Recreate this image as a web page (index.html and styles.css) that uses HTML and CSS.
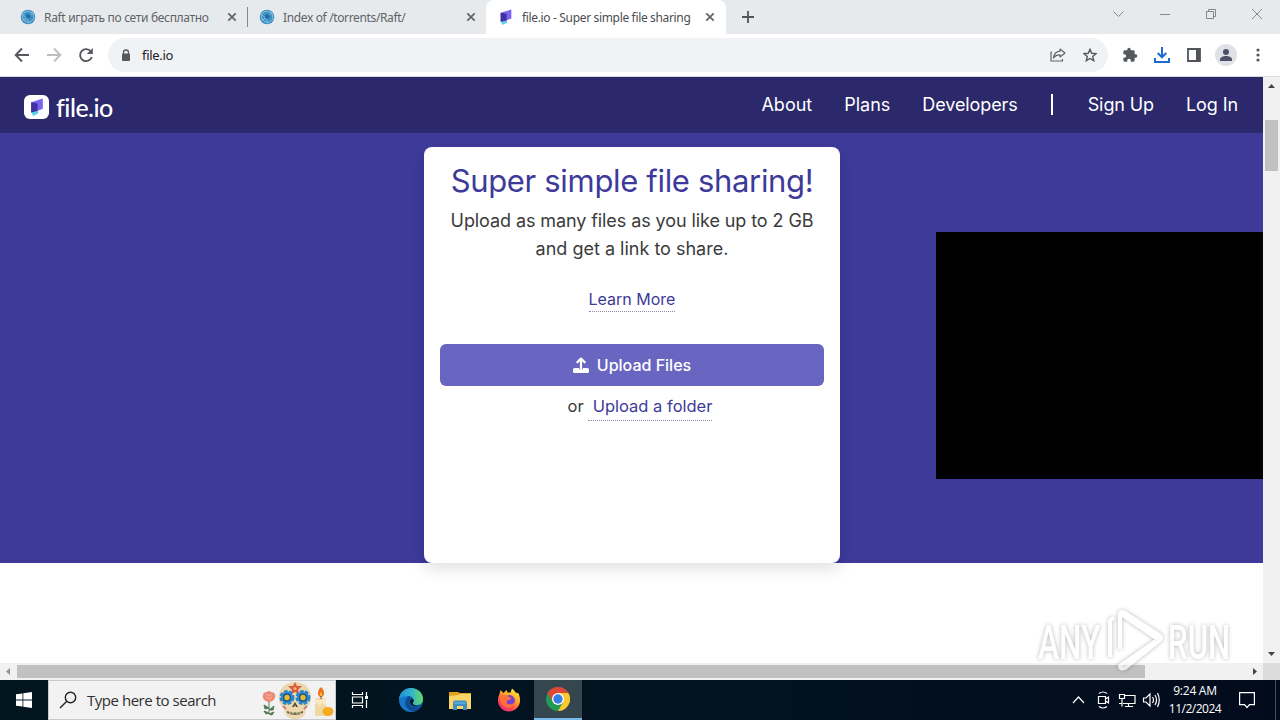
FILE: index.html
```html
<!DOCTYPE html>
<html lang="en">
<head>
    <meta charset="UTF-8">
    <meta name="viewport" content="width=device-width, initial-scale=1.0">
    <title>file.io - Super simple file sharing</title>
    <link rel="stylesheet" href="styles.css">
</head>
<body>

    <!-- shared icons -->
    <svg class="defs" width="0" height="0">
        <symbol id="globe" viewBox="0 0 16 16">
            <circle cx="8" cy="8" r="7.3" fill="#3c8fc4"/>
            <path d="M2 5l5-3 6 2 1 6-5 4-6-3zM2 5l5 4 6-5M7 9l2 5M3 11l4-2" fill="none" stroke="#8cc3dc" stroke-width=".9"/>
            <path d="M6 6l3-1 2 2-2 3-3-1z" fill="#1f6fa8"/>
        </symbol>
        <symbol id="close" viewBox="0 0 10 10">
            <path d="M1.300 1.300l7.400 7.400M8.700 1.300L1.300 8.700" fill="none" stroke="#5f6368" stroke-width="1.700"/>
        </symbol>
        <symbol id="fileio" viewBox="0 0 12 15">
            <path d="M1 10l6-1v4L2.500 15z" fill="#55d3e5"/>
            <path d="M1 3.500L11 .5v8.500L6.500 10.600 1 12z" fill="#7d62ef"/>
            <path d="M1 3.500l5.500 1v6.200L1 12z" fill="#4030a0"/>
        </symbol>
    </svg>

    <div class="tab-strip">
        <div class="tab">
            <svg class="favicon" width="16" height="16"><use href="#globe"/></svg>
            <span class="tab-title title-raft">Raft играть по сети бесплатно</span>
            <svg class="close" width="10" height="10"><use href="#close"/></svg>
        </div>
        <div class="tab divided">
            <svg class="favicon" width="16" height="16"><use href="#globe"/></svg>
            <span class="tab-title title-index">Index of /torrents/Raft/</span>
            <svg class="close" width="10" height="10"><use href="#close"/></svg>
        </div>
        <div class="tab active">
            <svg class="favicon" width="16" height="16"><use href="#fileio"/></svg>
            <span class="tab-title title-fileio">file.io - Super simple file sharing</span>
            <svg class="close" width="10" height="10"><use href="#close"/></svg>
        </div>
        <svg class="new-tab" width="12" height="12" viewBox="0 0 12 12"><path d="M6 0v12M0 6h12" stroke="#50555a" stroke-width="1.800"/></svg>
        <svg class="window-buttons" width="152" height="28" viewBox="0 0 152 28" fill="none" stroke="#85898d" stroke-width="1">
            <path d="M1.500 11.500l5 5 5-5"/>
            <path d="M48 14.500h10"/>
            <path d="M94.500 11.500h7v7h-7zM96.500 11.500v-2h7v7h-2"/>
            <path d="M140 9l10 10M150 9l-10 10"/>
        </svg>
    </div>

    <div class="toolbar">
        <svg class="nav-buttons" width="80" height="16" viewBox="0 0 80 16" fill="none" stroke="#55595e" stroke-width="1.900">
            <path d="M15 8H2M8 1.500L1.700 8 8 14.500"/>
            <path d="M33 8h13M40 1.500L46.300 8 40 14.500" stroke="#bcbec1"/>
            <path d="M76.900 4.500A6 6 0 1 0 77.800 10"/>
            <path d="M78.800 1v6h-6z" fill="#55595e" stroke="none"/>
        </svg>
        <div class="address-bar">
            <svg width="10" height="13" viewBox="0 0 10 13"><rect y="4.500" x="1" width="8" height="7.500" rx="1" fill="#55595e"/><path d="M2.500 5V3.500a2.500 2.500 0 0 1 5 0V5" fill="none" stroke="#55595e" stroke-width="1.300"/></svg>
            <span class="url">file.io</span>
            <svg class="share" width="16" height="14" viewBox="0 0 16 14" fill="none" stroke="#60646a" stroke-width="1.200"><path d="M2 4H1v9h11.500v-2M10 1l5 4-5 4V6.800C7 6.800 5 7.500 3.500 10 4 6 6 3.500 10 3.200z" stroke-linejoin="round"/></svg>
            <svg width="14" height="14" viewBox="0 0 14 14"><path d="M7 1.300l1.700 4 4.300.4-3.300 2.800 1 4.200L7 10.500l-3.700 2.200 1-4.200L1 5.700l4.300-.4z" fill="none" stroke="#55595e" stroke-width="1.400"/></svg>
        </div>
        <svg class="ext" width="16" height="16" viewBox="0 0 24 24"><path d="M20.500 11H19V7a2 2 0 0 0-2-2h-4V3.500a2.500 2.500 0 0 0-5 0V5H4a2 2 0 0 0-2 2v3.800h1.500a2.700 2.700 0 0 1 0 5.400H2V20a2 2 0 0 0 2 2h3.800v-1.500a2.700 2.700 0 0 1 5.400 0V22H17a2 2 0 0 0 2-2v-4h1.500a2.500 2.500 0 0 0 0-5z" fill="#55595e"/></svg>
        <svg class="download" width="16" height="16" viewBox="0 0 16 16" fill="none" stroke="#1b6ad6" stroke-width="2"><path d="M8 0v10M3.700 6L8 10.300 12.300 6M1 11v4h14v-4"/></svg>
        <svg class="side-panel" width="14" height="14" viewBox="0 0 14 14"><path d="M1 1h12v12H1z" fill="none" stroke="#50545a" stroke-width="1.800"/><path d="M9 1h4v12H9z" fill="#50545a"/></svg>
        <svg class="profile" width="22" height="22" viewBox="0 0 22 22"><circle cx="11" cy="11" r="11" fill="#dfe1e7"/><circle cx="11" cy="8" r="3" fill="#4c5068"/><path d="M5 17v-1.500c0-2 3-3.500 6-3.500s6 1.500 6 3.500V17z" fill="#4c5068"/></svg>
        <svg class="menu" width="4" height="14" viewBox="0 0 4 14" fill="#55595e"><circle cx="2" cy="2" r="1.600"/><circle cx="2" cy="7" r="1.600"/><circle cx="2" cy="12" r="1.600"/></svg>
    </div>

    <div class="viewport">
        <div class="page">
            <header class="navbar">
                <a class="brand">
                    <span class="brand-mark"><svg width="14" height="18" viewBox="0 0 12 15" preserveAspectRatio="none"><use href="#fileio"/></svg></span>
                    <span class="brand-name">file.io</span>
                </a>
                <nav class="nav-links">
                    <a class="about">About</a>
                    <a class="plans">Plans</a>
                    <a class="developers">Developers</a>
                    <span class="nav-divider"></span>
                    <a class="sign-up">Sign Up</a>
                    <a class="log-in">Log In</a>
                </nav>
            </header>
            <main class="hero">
                <section class="card">
                    <h1>Super simple file sharing!</h1>
                    <p class="lead"><span class="lead-first">Upload as many files as you like up to 2 GB</span><br><span class="lead-second">and get a link to share.</span></p>
                    <a class="learn-more">Learn More</a>
                    <button class="upload">
                        <svg width="16" height="16" viewBox="0 0 16 16"><path d="M8 12V2M4.300 5.300L8 1.600l3.700 3.700" fill="none" stroke="#fff" stroke-width="2.200" stroke-linecap="round" stroke-linejoin="round"/><path d="M1.500 11H6a2 2 0 0 0 4 0h4.500A1.500 1.500 0 0 1 16 12.500v2a1.500 1.500 0 0 1-1.500 1.500h-13A1.500 1.500 0 0 1 0 14.500v-2A1.500 1.500 0 0 1 1.500 11z" fill="#fff"/></svg>
                        <span>Upload Files</span>
                    </button>
                    <p class="folder">or <a>Upload a folder</a></p>
                </section>
                <div class="video"></div>
            </main>
        </div>
        <div class="scroll-y">
            <svg width="7" height="4" viewBox="0 0 7 4"><path d="M0 4l3.500-4L7 4z" fill="#444"/></svg>
            <div class="thumb-y"></div>
            <svg class="down" width="7" height="4" viewBox="0 0 7 4"><path d="M0 0h7L3.500 4z" fill="#444"/></svg>
        </div>
    </div>
    <div class="scroll-x">
        <svg width="4" height="7" viewBox="0 0 4 7"><path d="M4 0v7L0 3.500z" fill="#929292"/></svg>
        <div class="thumb-x"></div>
        <svg class="right" width="4" height="7" viewBox="0 0 4 7"><path d="M0 0v7l4-3.500z" fill="#444"/></svg>
        <span class="corner"></span>
    </div>

    <div class="taskbar">
        <div class="start">
            <svg width="16" height="16" viewBox="0 0 16 16" fill="#fff"><path d="M0 2.300L6.500 1.400v6.200H0zM7.300 1.300L16 0v7.600H7.300zM0 8.400h6.500v6.200L0 13.700zM7.300 8.400H16V16l-8.700-1.300z"/></svg>
        </div>
        <div class="search">
            <svg width="18" height="18" viewBox="0 0 18 18" fill="none" stroke="#222" stroke-width="1.400"><circle cx="11.500" cy="6.500" r="5.200"/><path d="M7.800 10.200L1 17"/></svg>
            <span class="search-text">Type here to search</span>
            <svg class="festive" width="76" height="38" viewBox="0 0 76 38">
                <!-- rose -->
                <path d="M9 20v13M9 27l-5-3 1 4zM9 29l5-4-1 4zM9 32l-5-2 2 3zM9 33l5-2-2 3z" fill="#527a57" stroke="#527a57"/>
                <path d="M3 14q0-3 4-3 2-2 4 0 4 0 4 3 1 4-3 6-3 2-6 0-4-2-3-6z" fill="#ed8a76"/>
                <path d="M6 16l3 2 3-2M6 13l3 2 3-2" fill="none" stroke="#f5b3a2"/>
                <!-- skull -->
                <path d="M35 1c10 0 17 7 16 17 0 5-3 7-5 9l-1 6q-2 5-10 5t-10-5l-1-6c-2-2-5-4-5-9C18 8 25 1 35 1z" fill="#ecd8af"/>
                <path d="M35 1l2 4 5 0-4 4 2 5-5-3-5 3 2-5-4-4h5z" fill="#db5b42"/>
                <circle cx="35" cy="7.500" r="1.500" fill="#f7ba5b"/>
                <g fill="#2a86c9"><circle cx="27" cy="16.500" r="6"/><circle cx="43" cy="16.500" r="6"/></g>
                <g fill="none" stroke="#2a86c9" stroke-width="4" stroke-dasharray="3.200 1.300"><circle cx="27" cy="16.500" r="5.500"/><circle cx="43" cy="16.500" r="5.500"/></g>
                <g fill="#24507c"><circle cx="27" cy="16.500" r="4"/><circle cx="43" cy="16.500" r="4"/></g>
                <g fill="#e6bc37"><circle cx="27" cy="16.500" r="2.700"/><circle cx="43" cy="16.500" r="2.700"/></g>
                <path d="M35 21l-3 5h2l1-2 1 2h2z" fill="#55483b"/>
                <path d="M27 30q8 3 16 0v2q-8 4-16 0z" fill="#6d6a4c"/>
                <path d="M30 31v2M33 31v2M37 31v2M40 31v2" stroke="#ecd8af"/>
                <path d="M23 25l3 3M47 25l-3 3" stroke="#d3796b" stroke-width="2"/>
                <!-- candle -->
                <path d="M55 17h11v18H55z" fill="#efd8a2"/>
                <path d="M55 17q5 4 11 0v6q-2 3-4-2l-2 5-2-4-3 1z" fill="#f9e9c3"/>
                <path d="M61 6c5 5 3 10 0 10s-5-5 0-10z" fill="#ec721c"/>
                <path d="M61 11c2 2 1 4 0 4s-2-2 0-4z" fill="#fcc341"/>
                <path d="M61 15v3" stroke="#6b4429"/>
                <ellipse cx="68" cy="30.500" rx="5.500" ry="4.500" fill="#f7ab1f"/>
            </svg>
        </div>
        <div class="task">
            <svg width="18" height="16" viewBox="0 0 18 16" fill="none" stroke="#fff" stroke-width="1.200"><path d="M1.500 0v2.500h10V0M1.500 16v-2.500h10V16M1.500 5h10v6h-10zM15.500 0v4M15.500 8v8"/><path d="M14 4h3v3h-3z" fill="#fff" stroke="none"/></svg>
        </div>
        <div class="task edge">
            <svg width="24" height="24" viewBox="0 0 24 24">
                <defs><linearGradient id="edge-top" x1="0" x2="1"><stop offset="0" stop-color="#2190d8"/><stop offset=".5" stop-color="#2fb4d0"/><stop offset="1" stop-color="#67db63"/></linearGradient></defs>
                <circle cx="12" cy="12" r="12" fill="#1675c8"/>
                <path d="M0 11C1 4 6 0 12 0c7 0 12 5 12 11 0 4-3 6-7 6-3 0-4-1-3-3 2-4-1-6-5-6-4 0-7 1-9 3z" fill="url(#edge-top)"/>
                <path d="M9 9c-5 4-3 11 3 14 5 1 8-1 10-5-3 2-9 2-11-2-1-3 0-5 2-6-1-1-3-2-4-1z" fill="#104b91"/>
                <path d="M24 15.500c-3 3-9 2.500-10 .5-.6-1 .8-2 .8-3.500 0-2-3-2.500-3.800.5-.5 3.500 2.500 5.500 6.500 5.500 3 0 5-1 6.500-3z" fill="#03161f"/>
            </svg>
        </div>
        <div class="task files">
            <svg width="22" height="19" viewBox="0 0 22 19"><path d="M0 1h9l2 1h11v16H0z" fill="#e6a020"/><path d="M0 5l9-1 2-1h11v15H0z" fill="#fcd468"/><path d="M4 19v-8l1.500-1.500h11L18 11v8h-4v-4H8v4z" fill="#3f8fc6"/><path d="M5 11h12v2H5z" fill="#5ba6d4"/></svg>
        </div>
        <div class="task firefox">
            <svg width="24" height="24" viewBox="0 0 24 24">
                <defs><linearGradient id="fox" x1=".8" x2=".2" y2="1"><stop offset="0" stop-color="#fff043"/><stop offset=".4" stop-color="#ffa127"/><stop offset=".7" stop-color="#ff4a50"/><stop offset="1" stop-color="#ee2384"/></linearGradient></defs>
                <path d="M2.500 6l1-4 3 3 3-3 1 2.500h3L15 .5c2 1.500 3.500 4 5 5l1-1c5.500 11-1 19-9 19C4 23.500-2 15 2.500 6z" fill="url(#fox)"/>
                <circle cx="12.500" cy="12.500" r="5.400" fill="#7941cf"/><path d="M4 8c4-2 6-1 8 1l3 1-3 2c-3 0-3 3-1 4 3 1 5 0 7-2-1 5-6 7-10 5-4-2-5-6-4-11z" fill="#ff7139"/>
            </svg>
        </div>
        <div class="task chrome">
            <svg width="24" height="24" viewBox="0 0 24 24"><circle cx="12" cy="12" r="12" fill="#229954"/><path d="M1.600 6A12 12 0 0 1 22.400 6H12L6.800 15z" fill="#df4638"/><path d="M22.400 6A12 12 0 0 1 12 24l5.200-9L12 6z" fill="#fbc82d"/><circle cx="12" cy="12" r="6" fill="#fff"/><circle cx="12" cy="12" r="4.700" fill="#377ee6"/></svg>
        </div>
        <div class="tray">
            <svg width="88" height="18" viewBox="0 0 88 18" fill="none" stroke="#fff" stroke-width="1.200">
                <path d="M1 12l5.500-6L12 12"/>
                <path d="M26.500 5.500h7v7h-7zM33.500 8l3-2v6l-3-2M27 2.500q4-3 8 0M27 15.500q4 3 8 0"/>
                <path d="M52 4.500h11v8H51M56.500 12.500v3M53 15.500h8M47.500 3.500h5v4h-5zM50 7.500v8M47 12.500h3"/>
                <path d="M71.500 7h2.500l4-4v12l-4-4h-2.500zM80.500 6q2 3 0 6M83 4q3 5 0 10M85.500 2q3.500 7 0 14"/>
            </svg>
            <div class="clock"><span class="time">9:24 AM</span><span class="date">11/2/2024</span></div>
            <svg class="notice" width="16" height="17" viewBox="0 0 16 17" fill="none" stroke="#fff" stroke-width="1.200"><path d="M.6.600h14.800v12H10.500L8 15.500 5.500 12.600H.6z"/></svg>
            <span class="show-desktop"></span>
        </div>
    </div>

    <div class="watermark">
        <svg width="212" height="72" viewBox="0 0 212 72">
            <g class="mark-text">
                <text transform="translate(4 54) scale(.66 1)">ANY</text>
                <text transform="translate(134 54) scale(.65 1)">RUN</text>
            </g>
            <path class="mark-line" d="M76 52V17q0-3 4-4M86 44V10q0-5 5-2l34 22q4 3 0 6L91 63q-5 2-5-2l36-25M87 9l37 25"/>
        </svg>
    </div>

</body>
</html>
```
FILE: styles.css
```css
* {
    box-sizing: border-box;
}
body {
    margin: 0;
    width: 1280px;
    height: 720px;
    overflow: hidden;
    position: relative;
    background: #fff;
    font-family: Inter, sans-serif;
}
svg {
    display: block;
    flex: none;
}
.defs {
    position: absolute;
}
span, a {
    white-space: nowrap;
}

/* browser window */
.tab-strip {
    display: flex;
    height: 34px;
    padding-left: 7px;
    background: #e7eaed;
}
.tab {
    display: flex;
    align-items: center;
    width: 241px;
    padding: 0 11px 0 13px;
    font: 12px "Noto Sans", sans-serif;
    color: #5f6368;
}
.tab:first-child {
    background: linear-gradient(#85898d, #85898d) right 7px / 1px 20px no-repeat;
}
.tab.divided {
    width: 238px;
    padding-left: 11px;
    padding-right: 10px;
}
.favicon {
    margin-right: 8px;
}
.tab .close {
    margin-left: auto;
}
.tab.active {
    width: 240px;
    background: #fff;
    border-radius: 8px 8px 0 0;
    padding-left: 12px;
    color: #4b4e52;
}
.title-raft {
    letter-spacing: -0.33px;
}
.title-index {
    letter-spacing: -0.36px;
}
.title-fileio {
    letter-spacing: -0.34px;
}
.new-tab {
    margin: 11px 0 0 16px;
}
.window-buttons {
    margin-left: auto;
    margin-right: 16px;
}
.toolbar {
    display: flex;
    align-items: center;
    height: 43px;
    padding: 0 14px;
    border-bottom: 1px solid #dadce0;
}
.address-bar {
    display: flex;
    flex: none;
    align-items: center;
    width: 1000px;
    height: 34px;
    margin-left: 14px;
    padding: 0 11px 0 13px;
    border-radius: 17px;
    background: #f0f2f5;
}
.url {
    margin-left: 11px;
    font: 13px "Noto Sans", sans-serif;
    letter-spacing: -0.3px;
    color: #202124;
}
.share {
    margin-left: auto;
    margin-right: 17px;
}
.ext {
    margin-left: 14px;
}
.download {
    margin-left: 16px;
}
.side-panel {
    margin-left: 17px;
}
.profile {
    margin-left: 14px;
}
.menu {
    margin-left: 19px;
}

/* page */
.viewport {
    display: flex;
    height: 586px;
}
.page {
    width: 1263px;
}
.navbar {
    display: flex;
    justify-content: space-between;
    height: 56px;
    padding: 0 25px 0 24px;
    background: #2b286b;
}
.brand {
    display: flex;
    align-items: center;
    padding-top: 4px;
}
.brand-mark {
    display: flex;
    align-items: center;
    justify-content: center;
    width: 25px;
    height: 24px;
    border-radius: 6px;
    background: #fff;
}
.brand-name {
    margin-left: 7px;
    font: 500 25px Lato, sans-serif;
    letter-spacing: -0.5px;
    color: #fff;
}
.nav-links {
    display: flex;
    align-items: center;
    padding-bottom: 1px;
    font-size: 18px;
    color: #fff;
}
.nav-links a {
    margin-left: 32px;
}
.nav-links .developers {
    letter-spacing: -0.1px;
}
.nav-divider {
    width: 2px;
    height: 21px;
    margin-left: 33px;
    background: #fff;
}
.nav-links .sign-up {
    margin-left: 35px;
    letter-spacing: -0.1px;
}
.nav-links .log-in {
    letter-spacing: -0.1px;
}
.hero {
    display: flex;
    align-items: flex-start;
    height: 430px;
    padding: 14px 0 0 424px;
    background: #3d3a99;
}
.card {
    display: flex;
    flex-direction: column;
    align-items: center;
    width: 416px;
    height: 416px;
    padding: 15px 16px 16px;
    border-radius: 8px;
    background: #fff;
    box-shadow: 0 6px 16px rgba(0, 0, 0, 0.12);
}
.card h1 {
    margin: 0;
    font-size: 31px;
    line-height: 38px;
    font-weight: 400;
    letter-spacing: -0.33px;
    color: #3d3a99;
    white-space: nowrap;
}
.lead {
    margin: 7px 0 0;
    font-size: 18px;
    line-height: 28px;
    text-align: center;
    color: #3b3b3b;
}
.lead-first {
    letter-spacing: -0.09px;
}
.learn-more {
    margin-top: 24px;
    height: 25px;
    font-size: 16px;
    line-height: 25px;
    color: #3d3a99;
    border-bottom: 1px dotted #8c8aa8;
}
.upload {
    display: flex;
    align-items: center;
    justify-content: center;
    gap: 8px;
    width: 384px;
    height: 42px;
    margin-top: 32px;
    padding: 0;
    border: 0;
    border-radius: 6px;
    background: #6966c2;
    font: 500 16px Inter, sans-serif;
    color: #fff;
}
.folder {
    display: flex;
    gap: 4px;
    margin: 6px 0 0 16px;
    font-size: 16.5px;
    line-height: 28px;
    color: #3b3b3b;
}
.folder a {
    padding-left: 5px;
    color: #3d3a99;
    border-bottom: 1px dotted #8c8aa8;
}
.video {
    width: 327px;
    height: 247px;
    margin: 85px 0 0 96px;
    background: #000;
}

/* scrollbars */
.scroll-y {
    display: flex;
    flex-direction: column;
    align-items: center;
    width: 17px;
    padding: 7px 0 7px;
    background: #f1f1f1;
}
.thumb-y {
    width: 13px;
    height: 51px;
    margin-top: 32px;
    background: #c1c1c1;
}
.down {
    margin-top: auto;
}
.scroll-x {
    display: flex;
    align-items: center;
    height: 17px;
    padding-left: 6px;
    background: #f1f1f1;
}
.thumb-x {
    width: 1128px;
    height: 13px;
    margin-left: 7px;
    background: #c1c1c1;
}
.right {
    margin-left: auto;
    margin-right: 6px;
}
.corner {
    width: 17px;
    height: 17px;
    background: #dcdcdc;
}

/* taskbar */
.taskbar {
    display: flex;
    height: 40px;
    background: linear-gradient(90deg, #02161f, #02121f 60%, #020b1c);
    color: #fff;
}
.start,
.task {
    display: flex;
    align-items: center;
    justify-content: center;
    width: 48px;
}
.search {
    display: flex;
    align-items: center;
    width: 288px;
    padding-left: 10px;
    border: 1px solid #c7cacc;
    background: #f2f2f2;
    color: #303030;
}
.search-text {
    margin-left: 10px;
    font: 15px "Open Sans", sans-serif;
    letter-spacing: -0.47px;
}
.festive {
    margin-left: auto;
    margin-right: -1px;
}
.task.edge {
    margin-left: 3px;
}
.task.files,
.task.firefox {
    width: 49px;
}
.task.chrome {
    margin-left: 1px;
    background: #35464f;
    border-bottom: 2px solid #76b9ed;
}
.tray {
    display: flex;
    align-items: center;
    margin-left: auto;
}
.clock {
    display: flex;
    flex-direction: column;
    align-items: center;
    width: 70px;
    font: 12px/18px "Open Sans", sans-serif;
}
.time {
    letter-spacing: -0.25px;
}
.date {
    letter-spacing: -0.5px;
}
.notice {
    margin-left: 9px;
}
.show-desktop {
    width: 1px;
    height: 40px;
    margin: 0 4px 0 20px;
    background: #45505a;
}

/* recorder watermark over the desktop */
.watermark {
    position: absolute;
    left: 1034px;
    top: 605px;
}
.mark-text {
    font: 500 48px Roboto, sans-serif;
    fill: #fff;
}
.mark-line {
    fill: none;
    stroke: #fff;
    stroke-width: 4;
    stroke-linejoin: round;
}
.watermark svg {
    filter: drop-shadow(0 0 2px rgba(0, 0, 0, 0.4));
    opacity: 0.7;
}
```
